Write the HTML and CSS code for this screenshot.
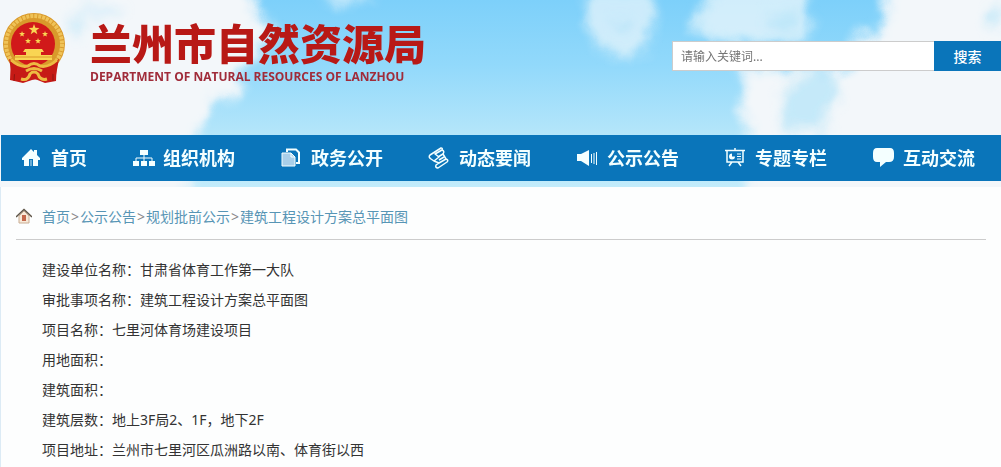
FILE: index.html
```
<!doctype html>
<html lang="zh-CN">
  <head>
    <meta charset="utf-8">
    <title>兰州市自然资源局</title>
    <link rel="stylesheet" href="styles.css">
  </head>
  <body>
    <div class="sky">
      <svg class="sky-bg" viewBox="0 0 1001 187" preserveAspectRatio="none" aria-hidden="true">
        <defs>
          <linearGradient id="skyFill" x1="0" y1="0" x2="0" y2="1">
            <stop offset="0" stop-color="#7dd0fa" />
            <stop offset="0.35" stop-color="#92d9fb" />
            <stop offset="0.7" stop-color="#b3e5fa" />
            <stop offset="1" stop-color="#c2ecfb" />
          </linearGradient>
          <filter id="soft" x="-10%" y="-10%" width="120%" height="120%">
            <feGaussianBlur stdDeviation="6" result="b" />
            <feTurbulence type="fractalNoise" baseFrequency="0.03" numOctaves="3" seed="4" />
            <feDisplacementMap in="b" scale="24" xChannelSelector="R" yChannelSelector="G" />
          </filter>
          <filter id="softer" x="-60%" y="-60%" width="220%" height="220%">
            <feGaussianBlur stdDeviation="6" result="b" />
            <feTurbulence type="fractalNoise" baseFrequency="0.03" numOctaves="3" seed="9" />
            <feDisplacementMap in="b" scale="20" xChannelSelector="R" yChannelSelector="G" />
          </filter>
        </defs>
        <rect width="1001" height="187" fill="url(#skyFill)" />
        <g fill="#f3f7fa" filter="url(#soft)">
          <path d="M-60 -40H240L256 8L272 30L262 54L240 70L236 98L214 106L202 124L192 150L176 240H-60Z" />
          <path d="M738 66H850L862 36L884 22L892 -40H1070V240H750L748 130Z" />
        </g>
        <g fill="#eef7fb" filter="url(#softer)">
          <path d="M720 -20H810L812 40L740 44L690 30L696 14Z" opacity="0.75" />
          <path d="M586 -10H650L652 44L630 58L600 50L584 24Z" opacity="0.7" />
          <ellipse cx="345" cy="-4" rx="24" ry="7" opacity="0.7" />
        </g>
        <g fill="#b0e2f8" filter="url(#softer)">
          <ellipse cx="100" cy="12" rx="24" ry="7" opacity="0.3" />
          <ellipse cx="76" cy="26" rx="9" ry="7" opacity="0.6" />
          <ellipse cx="622" cy="24" rx="6" ry="6" opacity="0.9" />
          <ellipse cx="784" cy="20" rx="18" ry="10" opacity="0.6" />
          <path d="M796 72L826 70L838 88L826 130H788L780 100Z" opacity="0.7" />
          <ellipse cx="995" cy="16" rx="9" ry="12" opacity="0.6" />
        </g>
      </svg>

      <header class="header">
        <a class="logo" href="#">
          <svg class="emblem" viewBox="0 0 64 72" aria-hidden="true">
            <path d="M8 44L7 67L20 70L32 66L42 70L53 68L54 44Z" fill="#c61a16" />
            <path d="M12 52L11 68M50 52L50 68" stroke="#8d1510" stroke-width="1" />
            <ellipse cx="31" cy="31" rx="31" ry="31" fill="#d99a2b" />
            <ellipse cx="31" cy="31" rx="28" ry="28" fill="none" stroke="#efc358" stroke-width="4" stroke-dasharray="3 1" />
            <ellipse cx="30" cy="31" rx="22" ry="22" fill="#d1191a" />
            <g fill="#f9d553">
              <path d="M31 11l1.400 3.800 4 .1-3.200 2.500 1.200 3.900-3.400-2.300-3.300 2.300 1.200-3.900-3.200-2.500 4-.1z" />
              <path d="M19 18l.8 2 2.200.1-1.700 1.400.6 2.100-1.900-1.200-1.800 1.200.6-2.100-1.800-1.400 2.300-.1z" />
              <path d="M42 18l.8 2 2.200.1-1.700 1.400.6 2.100-1.900-1.200-1.800 1.200.6-2.100-1.800-1.400 2.300-.1z" />
              <path d="M25 25l.8 2 2.200.1-1.700 1.400.6 2.100-1.900-1.200-1.800 1.200.6-2.100-1.800-1.400 2.300-.1z" />
              <path d="M35 25l.8 2 2.200.1-1.700 1.400.6 2.100-1.900-1.200-1.800 1.200.6-2.100-1.800-1.400 2.300-.1z" />
              <path d="M22 36h17l2 3h-3v3h11v5H12v-5h11v-3h-3z" />
            </g>
            <path d="M12 44h37" stroke="#d99a2b" stroke-width="1" />
            <path d="M6 46Q17 54 25 52Q31 48 37 52Q45 54 56 46L53 62Q42 58 38 65Q31 68 24 65Q20 58 9 62Z" fill="#c61a16" />
            <path d="M8 47Q17 55 25 53Q31 48 37 53Q45 55 54 47M18 66Q25 68 27 61Q31 57 35 61Q37 68 44 66M23 58Q31 53 39 58" fill="none" stroke="#edbb42" stroke-width="3" />
          </svg>
          <span class="logo-text">
            <span class="logo-cn">兰州市自然资源局</span>
            <span class="logo-en">DEPARTMENT OF NATURAL RESOURCES OF LANZHOU</span>
          </span>
        </a>
        <form class="search">
          <input type="text" placeholder="请输入关键词..." aria-label="请输入关键词">
          <button type="submit">搜索</button>
        </form>
      </header>

      <nav class="nav">
        <a href="#">
          <svg viewBox="0 0 20 20" aria-hidden="true">
            <path d="M10 1L13 4V2H16V7L19 10V12H17V18H12V11H8V18H3V12H1V10Z" fill="currentColor" />
            <path d="M9 12h2v6H9z" fill="currentColor" opacity="0.4" />
          </svg>
          首页
        </a>
        <a href="#">
          <svg viewBox="0 0 20 20" aria-hidden="true">
            <path d="M7 2h8v5H7zM0 13h6v5H0zM8 13h6v5H8zM16 13h6v5h-6z" fill="currentColor" />
            <path d="M11 7v6M3 13v-3h16v3" fill="none" stroke="currentColor" />
          </svg>
          组织机构
        </a>
        <a href="#">
          <svg viewBox="0 0 20 20" aria-hidden="true">
            <path d="M1 5h9l4 4v9H1z" fill="#a9cfe9" stroke="currentColor" />
            <path d="M10 5v4h4" fill="none" stroke="currentColor" />
            <path d="M6 4V1.500h9l3 3V15h-3" fill="none" stroke="currentColor" stroke-width="2" />
          </svg>
          政务公开
        </a>
        <a href="#">
          <svg viewBox="0 0 20 20" aria-hidden="true">
            <g fill="none" stroke="currentColor" stroke-width="1.500" stroke-linejoin="round">
              <path d="M12 0L1 7Q-1 9 2 11L5 13L10 9L6 6L13 2Q14 0 12 0Z" />
              <path d="M13 2Q16 3 14 6L17 11Q20 12 18 14L9 20Q6 20 7 17L10 15L5 13" />
              <path d="M9 9L14 6M10 12L15 9M10 15L17 11" />
            </g>
          </svg>
          动态要闻
        </a>
        <a href="#">
          <svg viewBox="0 0 20 20" aria-hidden="true">
            <path d="M0 6h4l8-4v16l-8-5H0z" fill="currentColor" />
            <path d="M14.500 6v9M17 5v11M19.500 4v13" stroke="currentColor" />
          </svg>
          公示公告
        </a>
        <a href="#">
          <svg viewBox="0 0 20 20" aria-hidden="true">
            <path d="M0 2.500h20M2 3v11h16V3M10 0v2M7 14l-3 4M13 14l3 4" fill="none" stroke="currentColor" stroke-width="1.500" />
            <path d="M7 5.500a3 3 0 1 0 3 3H7z" fill="currentColor" />
            <path d="M12 6h4M12 8.500h4M12 11h4" stroke="currentColor" />
          </svg>
          专题专栏
        </a>
        <a href="#">
          <svg viewBox="0 0 20 20" aria-hidden="true">
            <path d="M4 0H17Q21 0 21 5V9Q21 14 16 14H13L7 19V14H4Q0 14 0 9V5Q0 0 4 0Z" fill="currentColor" />
          </svg>
          互动交流
        </a>
      </nav>
    </div>

    <main class="main">
      <div class="breadcrumb">
        <svg viewBox="0 0 16 16" aria-hidden="true">
          <path d="M3 8v7h10V8L8 3z" fill="#f7ead9" stroke="#c8ad94" />
          <path d="M0 9L8 1.500L16 9" fill="none" stroke="#5f5547" stroke-width="1.500" />
          <path d="M6 7h4v6H6z" fill="#c4694c" />
        </svg>
        <a href="#">首页</a><i>&gt;</i><a href="#">公示公告</a><i>&gt;</i><a href="#">规划批前公示</a><i>&gt;</i><a href="#">建筑工程设计方案总平面图</a>
      </div>
      <div class="article">
        <p>建设单位名称：甘肃省体育工作第一大队</p>
        <p>审批事项名称：建筑工程设计方案总平面图</p>
        <p>项目名称：七里河体育场建设项目</p>
        <p>用地面积：</p>
        <p>建筑面积：</p>
        <p>建筑层数：地上3F局2、1F，地下2F</p>
        <p>项目地址：兰州市七里河区瓜洲路以南、体育街以西</p>
      </div>
    </main>
  </body>
</html>
```
FILE: styles.css
```
:root {
  --primary: #0a75ba;
  --text: #333333;
  --link: #5795b5;
  --logo-red: #b81916;
  --border: #cccccc;
}

* {
  box-sizing: border-box;
}

body {
  margin: 0;
  background: #fdfefe;
  color: var(--text);
  font-family: 'Noto Sans', 'Noto Sans CJK SC', sans-serif;
  font-size: 14px;
}

a {
  text-decoration: none;
}

.sky {
  position: relative;
  padding-bottom: 6px;
}

.sky-bg {
  position: absolute;
  top: 0;
  left: 0;
  width: 100%;
  height: 100%;
}

.header {
  position: relative;
  display: flex;
  justify-content: space-between;
  align-items: flex-start;
  min-height: 135px;
  padding-left: 3px;
}

.logo {
  display: flex;
  gap: 23px;
  padding-top: 13px;
  color: var(--logo-red);
}

.emblem {
  width: 64px;
  height: 72px;
}

.logo-text {
  display: flex;
  flex-direction: column;
  padding-top: 2px;
}

.logo-cn {
  font-family: 'Noto Sans CJK SC', sans-serif;
  font-size: 42px;
  font-weight: 900;
  line-height: 54px;
}

.logo-en {
  font-family: 'Open Sans', sans-serif;
  font-size: 12px;
  font-weight: 700;
  line-height: 16px;
  color: #a02c3a;
}

.search {
  display: flex;
  width: 329px;
  height: 30px;
  margin-top: 41px;
}

.search input {
  flex: 1;
  min-width: 0;
  padding: 0 8px;
  border: 1px solid var(--border);
  border-right: 0;
  background: #ffffff;
  font-family: inherit;
  font-size: 12px;
}

.search input::placeholder {
  color: #757575;
}

.search button {
  width: 67px;
  padding: 0;
  border: 0;
  background: var(--primary);
  color: #ffffff;
  font-family: inherit;
  font-size: 14px;
  font-weight: 500;
}

.nav {
  position: relative;
  display: flex;
  justify-content: space-between;
  margin-left: 1px;
  padding: 0 26px 0 20px;
  background: var(--primary);
}

.nav a {
  display: flex;
  align-items: center;
  gap: 10px;
  color: #f4ffff;
  font-size: 18px;
  font-weight: 700;
  line-height: 46px;
}

.nav svg {
  width: 20px;
  height: 20px;
  overflow: visible;
}

.main {
  padding: 0 15px 15px;
  border-left: 1px solid #dcebf5;
}

.breadcrumb {
  display: flex;
  align-items: center;
  height: 53px;
  padding-top: 6px;
  border-bottom: 1px solid var(--border);
  color: #888888;
}

.breadcrumb svg {
  width: 16px;
  height: 16px;
  margin-right: 10px;
}

.breadcrumb a {
  color: var(--link);
}

.breadcrumb i {
  margin: 0 1px;
  font-style: normal;
}

.article {
  padding: 15px 26px 0;
}

.article p {
  margin: 0;
  line-height: 30px;
}
```
